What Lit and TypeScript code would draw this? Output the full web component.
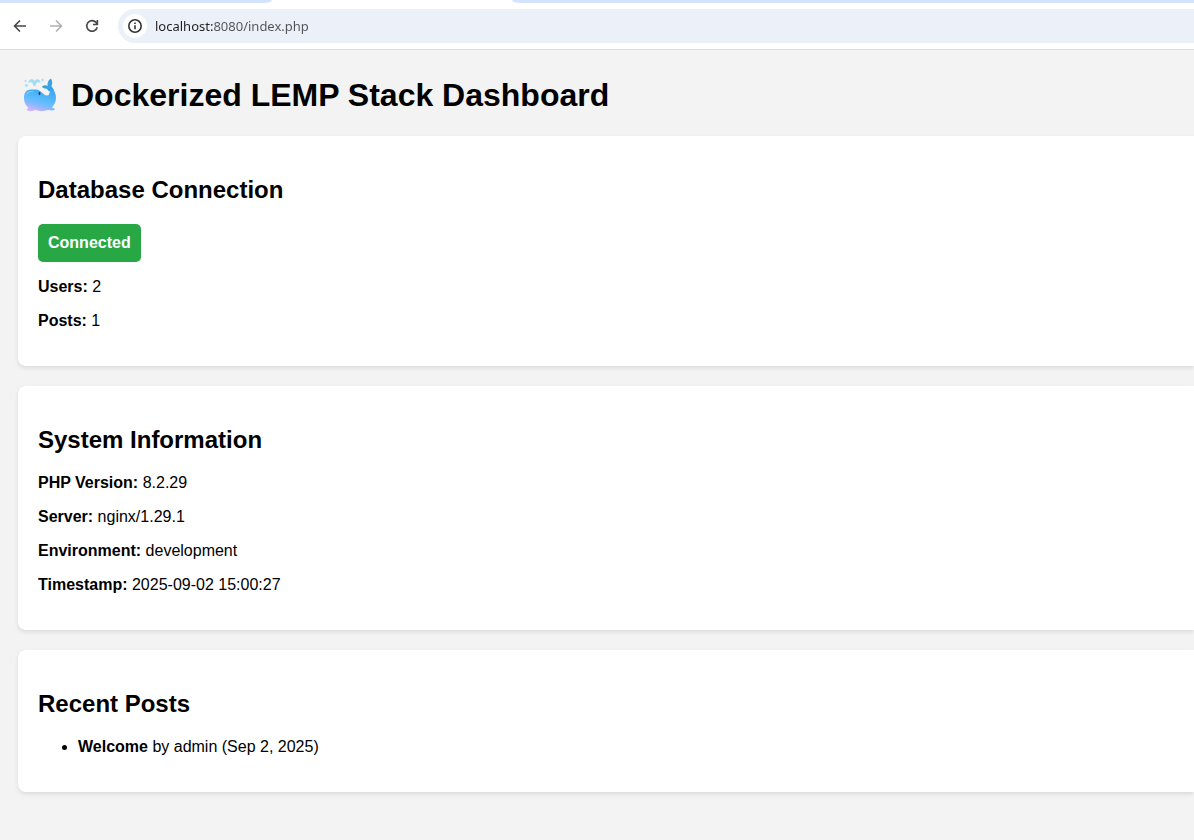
import { LitElement, html, css } from "lit";
import { customElement, property } from "lit/decorators.js";

@customElement("browser-bar")
class BrowserBar extends LitElement {
  @property() url = "";

  static styles = css`
    :host { display: block; background: #fff; border-bottom: 1px solid #dcdcdc; }
    .tabs { display: flex; justify-content: space-between; height: 3px; background: #fff; }
    .tab { height: 3px; background: #d3e3fd; }
    .before { width: 272px; border-bottom-right-radius: 8px 3px; }
    .gap { width: 240px; }
    .after { flex: 1; border-bottom-left-radius: 8px 3px; }
    .bar { display: flex; align-items: center; padding: 6px 0 6px 10px; }
    .nav { display: flex; gap: 16px; margin-right: 16px; }
    button { display: flex; align-items: center; justify-content: center; width: 20px; height: 20px; padding: 0; border: 0; background: none; color: #474747; }
    button:disabled { color: #b0b0b0; }
    .address { flex: 1; display: flex; align-items: center; height: 34px; padding-left: 5px; border-radius: 17px 0 0 17px; background: #ecf0f9; }
    .info { width: 24px; height: 24px; margin-right: 8px; border-radius: 50%; background: #fff; color: #333; }
    input {
      flex: 1; min-width: 0; height: 24px; padding: 0; border: 0; outline: 0;
      font: 13px/24px "Noto Sans", "Open Sans", sans-serif;
      color: transparent; background: linear-gradient(90deg, #1f1f1f 58px, #505256 58px);
      background-clip: text; -webkit-background-clip: text;
    }
    svg { fill: none; stroke: currentColor; stroke-width: 1.6; }
  `;

  render() {
    return html`
      <div class="tabs"><div class="tab before"></div><div class="gap"></div><div class="tab after"></div></div>
      <div class="bar">
        <nav class="nav">
          <button aria-label="Back"><svg width="16" height="16" viewBox="0 0 16 16"><path d="M14 8H3M8 2.5 2.5 8 8 13.5"/></svg></button>
          <button aria-label="Forward" disabled><svg width="16" height="16" viewBox="0 0 16 16"><path d="M2 8h11M8 2.5 13.5 8 8 13.5"/></svg></button>
          <button aria-label="Reload"><svg width="16" height="16" viewBox="0 0 16 16"><path d="M13.2 9.2A5.3 5.3 0 1 1 12 4.4L13.3 5.9M13.4 2v4.5H9"/></svg></button>
        </nav>
        <div class="address">
          <button class="info" aria-label="Site information"><svg width="16" height="16" viewBox="0 0 16 16"><circle cx="8" cy="8" r="6.200"/><path d="M8 7.2v4M8 4.5v1.6"/></svg></button>
          <input type="text" aria-label="Address" .value=${this.url} spellcheck="false">
        </div>
      </div>`;
  }
}

@customElement("info-card")
class InfoCard extends LitElement {
  @property() heading = "";

  static styles = css`
    :host { display: block; margin-bottom: 20px; padding: 20px; background: #fff; border-radius: 8px 0 0 8px; box-shadow: 0 2px 4px rgba(0, 0, 0, 0.1); }
    h2 { margin: 20px 0; font-size: 24px; line-height: 28px; }
  `;

  render() {
    return html`<h2>${this.heading}</h2><slot></slot>`;
  }
}

@customElement("app-root")
class AppRoot extends LitElement {
  static styles = css`
    :host { display: block; min-height: 100vh; background: #f3f3f3; color: #000; font: 16px/18px "Liberation Sans", Arial, sans-serif; overflow-x: hidden; }
    main { padding: 26px 0 20px 18px; }
    h1 { display: flex; align-items: center; gap: 13px; margin: 0 0 22px; padding-left: 4px; font-size: 32px; line-height: 38px; }
    p { margin: 16px 0; }
    .status { display: inline-block; padding: 10px; margin-bottom: 16px; border-radius: 5px; background: #28a745; color: #fff; font-weight: bold; vertical-align: top; }
    .status + p { margin-top: 0; }
    ul { margin: 16px 0; padding-left: 40px; }
  `;

  render() {
    const system = [
      ["PHP Version", "8.2.29"],
      ["Server", "nginx/1.29.1"],
      ["Environment", "development"],
      ["Timestamp", "2025-09-02 15:00:27"],
    ];
    return html`
      <browser-bar url="localhost:8080/index.php"></browser-bar>
      <main>
        <h1>
          <svg width="36" height="36" viewBox="0 0 36 36" role="img" aria-label="Whale">
            <defs>
              <linearGradient id="body" x1="0.65" y1="0.2" x2="0.35" y2="1">
                <stop offset="0" stop-color="#45acf2"/><stop offset="0.4" stop-color="#5bbcfd"/><stop offset="0.7" stop-color="#86b9fc"/><stop offset="1" stop-color="#d3b4fb"/>
              </linearGradient>
            </defs>
            <g fill="#a3dcf5">
              <path d="M6.500 6C6 2 11 1 12.500 4 14 1 19 2 18.500 6 16.500 5 15 5 14 7l-.5 2h-2L11 7C10 5 8.500 5 6.500 6z"/>
              <circle cx="3.500" cy="4" r="1.100"/><circle cx="20.500" cy="3" r="1.200"/><circle cx="4.500" cy="8.500" r="1.400"/>
            </g>
            <path fill="url(#body)" d="M2 21c0-5 2-8.500 7-8.500h5c5 0 7 6 11 6 2 0 3-2 2.500-4.500L26 11h4.500c2 3 3.500 6 3.500 10 0 4-2 7-4 9.500 1.500.5 2.500 1 3 2-2 1.500-5 1-7 .5-4 1.500-9 1.500-13 0-2 1.500-6 1.500-8.500 0 .5-1 1-1.500 2-2C3.500 28.500 2 25 2 21z"/>
            <path fill="#37a2e4" d="M26.500 14c-1-2-1.500-2-3-2.500-1.500 0-3-.5-3.500-2 2-1.500 4-1.500 5.500-.5C25.500 6 26 3 29 1.500c1.500 2.500 1.500 5 .5 7.500l2.500 4.500z"/>
            <path fill="#8edaff" opacity="0.7" d="M3.500 18c1-3.500 4-4.500 9-4-3 1-6 1-9 4z"/>
            <ellipse cx="17.500" cy="16.500" rx="0.900" ry="1.700" fill="#213a72"/>
          </svg>
          <span>Dockerized LEMP Stack Dashboard</span>
        </h1>
        <info-card heading="Database Connection">
          <div class="status">Connected</div>
          <p><strong>Users:</strong> 2</p>
          <p><strong>Posts:</strong> 1</p>
        </info-card>
        <info-card heading="System Information">
          ${system.map(([name, value]) => html`<p><strong>${name}:</strong> ${value}</p>`)}
        </info-card>
        <info-card heading="Recent Posts">
          <ul><li><strong>Welcome</strong> by admin (Sep 2, 2025)</li></ul>
        </info-card>
      </main>`;
  }
}
